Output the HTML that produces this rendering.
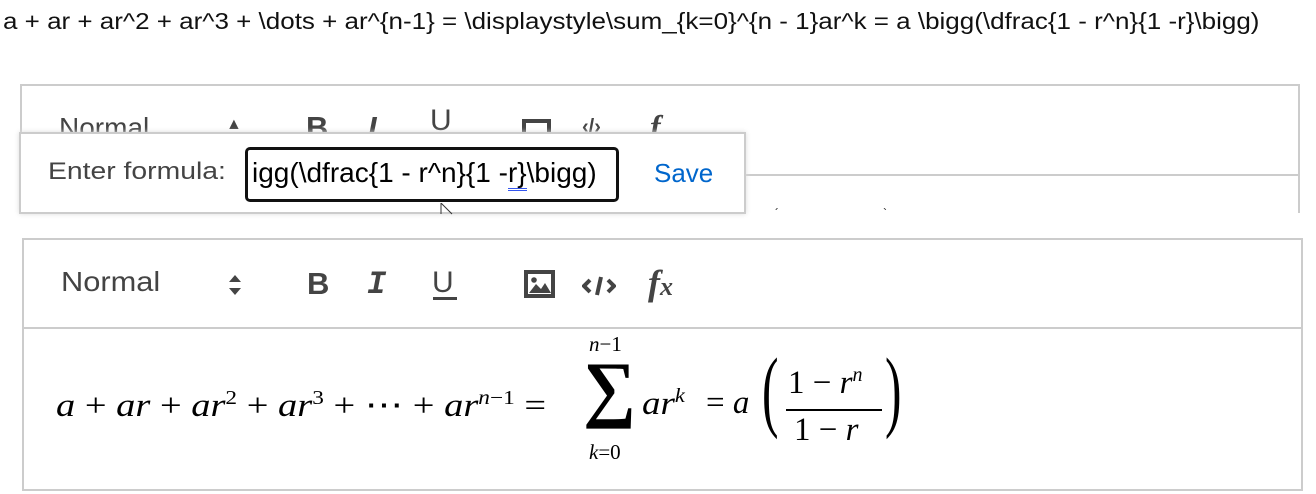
<!DOCTYPE html>
<html><head><meta charset="utf-8"><style>
*{margin:0;padding:0;box-sizing:border-box}
body{width:1316px;height:494px;background:#fff;position:relative;overflow:hidden;font-family:"Liberation Sans",Arial,sans-serif}
.abs{position:absolute;white-space:nowrap}
.top{left:3px;top:8px;font-size:23px;color:#111;transform:scaleX(1.13);transform-origin:left}
.ed1{left:20px;top:84px;width:1280px;height:140px;border:2px solid #ccc;border-bottom:none}
.ed1 .div{position:absolute;left:0;right:0;top:88px;border-top:2px solid #ccc}
.clip{left:0;top:213px;width:1316px;height:24px;background:#fff}
.ed2{left:22px;top:238px;width:1281px;height:253px;border:2px solid #ccc}
.ed2 .div{position:absolute;left:0;right:0;top:87px;border-top:2px solid #ccc}
.tb{font-size:28px;color:#444}
.m{font-family:"Liberation Serif","DejaVu Serif",serif;font-style:italic;color:#000}
.r{font-family:"Liberation Serif","DejaVu Serif",serif;font-style:normal;color:#000}
.tip{left:19px;top:132px;width:727px;height:82px;background:#fff;border:2px solid #ccc;box-shadow:0 0 5px #ddd}
.inp{position:absolute;left:224px;top:13px;width:374px;height:55px;border:3px solid #111;border-radius:5px;overflow:hidden;font-size:28px;color:#000;padding:7px 0 0 8px}
</style></head><body>
<div class="abs top">a + ar + ar^2 + ar^3 + \dots + ar^{n-1} = \displaystyle\sum_{k=0}^{n - 1}ar^k = a \bigg(\dfrac{1 - r^n}{1 -r}\bigg)</div>

<div class="abs ed1"><div class="div"></div>
<div class="abs tb" style="left:37px;top:26px">Normal</div>
<div class="abs tb" style="left:204px;top:30px;font-size:16px">▲</div>
<div class="abs tb" style="left:284px;top:24px;font-weight:bold;font-size:31px">B</div>
<div class="abs tb" style="left:346px;top:24px;font-style:italic;font-weight:bold;font-size:31px">I</div>
<div class="abs tb" style="left:408px;top:18px;font-size:30px">U</div>
<div class="abs" style="left:500px;top:33px;width:29px;height:20px;border:4px solid #444"></div>
<div class="abs tb" style="left:560px;top:30px;font-size:20px;font-weight:bold">‹/›</div>
<div class="abs m" style="left:628px;top:22px;font-size:32px;font-weight:bold;color:#444">f</div>
</div>
<div class="abs clip"></div>
<div class="abs" style="left:775px;top:206px;font-size:12px">´</div>
<div class="abs" style="left:883px;top:206px;font-size:12px">`</div>

<div class="abs tip">
<div class="abs" style="left:27px;top:24px;font-size:24px;color:#444;transform:scaleX(1.18);transform-origin:left">Enter formula:</div>
<div class="inp"><span style="margin-left:-4px;display:inline-block;transform:scaleX(1.0);transform-origin:left">igg(\dfrac{1 - r^n}{1 -<span style="border-bottom:3px double #3355ee">r}</span>\bigg)</span></div>
<div class="abs" style="left:633px;top:24px;font-size:26px;color:#0066cc">Save</div>
</div>
<svg class="abs" style="left:440px;top:203px" width="18" height="12"><path d="M1 0 L1 11 M1 0 L12 11" stroke="#333" fill="none"/></svg>

<div class="abs ed2"><div class="div"></div>
<div class="abs tb" style="left:37px;top:26px;transform:scaleX(1.1);transform-origin:left">Normal</div>
<svg class="abs" style="left:203px;top:34px" width="16" height="22"><path d="M8 1 L14 8 H2Z M8 21 L14 14 H2Z" fill="#444"/></svg>
<div class="abs tb" style="left:283px;top:26px;font-weight:bold;font-size:31px">B</div>
<div class="abs tb" style="left:343px;top:26px;font-style:italic;font-weight:bold;font-size:32px;font-family:'Liberation Mono',monospace">I</div>
<div class="abs tb" style="left:408px;top:26px;font-size:30px">U</div>
<div class="abs" style="left:409px;top:57px;width:24px;border-top:3px solid #444"></div>
<svg class="abs" style="left:500px;top:30px" width="32" height="30"><rect x="2" y="2" width="27" height="24" fill="none" stroke="#444" stroke-width="4"/><path d="M5 23 L12 14 L17 19 L21 13 L27 23Z" fill="#444"/><circle cx="10" cy="10" r="2.8" fill="#444"/></svg>
<svg class="abs" style="left:558px;top:35px" width="34" height="22"><path d="M8 5 L2 11 L8 17 M26 5 L32 11 L26 17 M19 2 L15 20" stroke="#444" stroke-width="4" fill="none"/></svg>
<div class="abs m" style="left:624px;top:22px;font-size:36px;font-weight:bold;color:#444">f<span style="font-size:26px">x</span></div>

<div class="abs m" style="left:32px;top:145px;font-size:33px;transform:scaleX(1.165);transform-origin:left">a <span class="r">+</span> ar <span class="r">+</span> ar<sup style="font-size:20px;font-style:normal">2</sup> <span class="r">+</span> ar<sup style="font-size:20px;font-style:normal">3</sup> <span class="r">+ ⋯ +</span> ar<sup style="font-size:20px">n<span class="r">−1</span></sup> <span class="r">=</span></div>
<div class="abs r" style="left:559px;top:112px;font-size:74px;line-height:1;font-weight:bold">∑</div>
<div class="abs m" style="left:565px;top:92px;font-size:21px">n<span class="r">−1</span></div>
<div class="abs m" style="left:565px;top:200px;font-size:21px">k<span class="r">=0</span></div>
<div class="abs m" style="left:618px;top:145px;font-size:33px;transform:scaleX(1.12);transform-origin:left">ar<sup style="font-size:20px">k</sup></div>
<div class="abs m" style="left:682px;top:145px;font-size:33px"><span class="r">=</span> a</div>
<div class="abs r" style="left:738px;top:106px;font-size:90px;line-height:1;transform:scaleX(0.55);transform-origin:left">(</div>
<div class="abs m" style="left:764px;top:124px;font-size:33px"><span class="r">1 −</span> r<sup style="font-size:20px">n</sup></div>
<div class="abs" style="left:762px;top:169px;width:96px;border-top:2px solid #000"></div>
<div class="abs m" style="left:770px;top:172px;font-size:33px"><span class="r">1 −</span> r</div>
<div class="abs r" style="left:861px;top:106px;font-size:90px;line-height:1;transform:scaleX(0.55);transform-origin:left">)</div>
</div>
</body></html>
